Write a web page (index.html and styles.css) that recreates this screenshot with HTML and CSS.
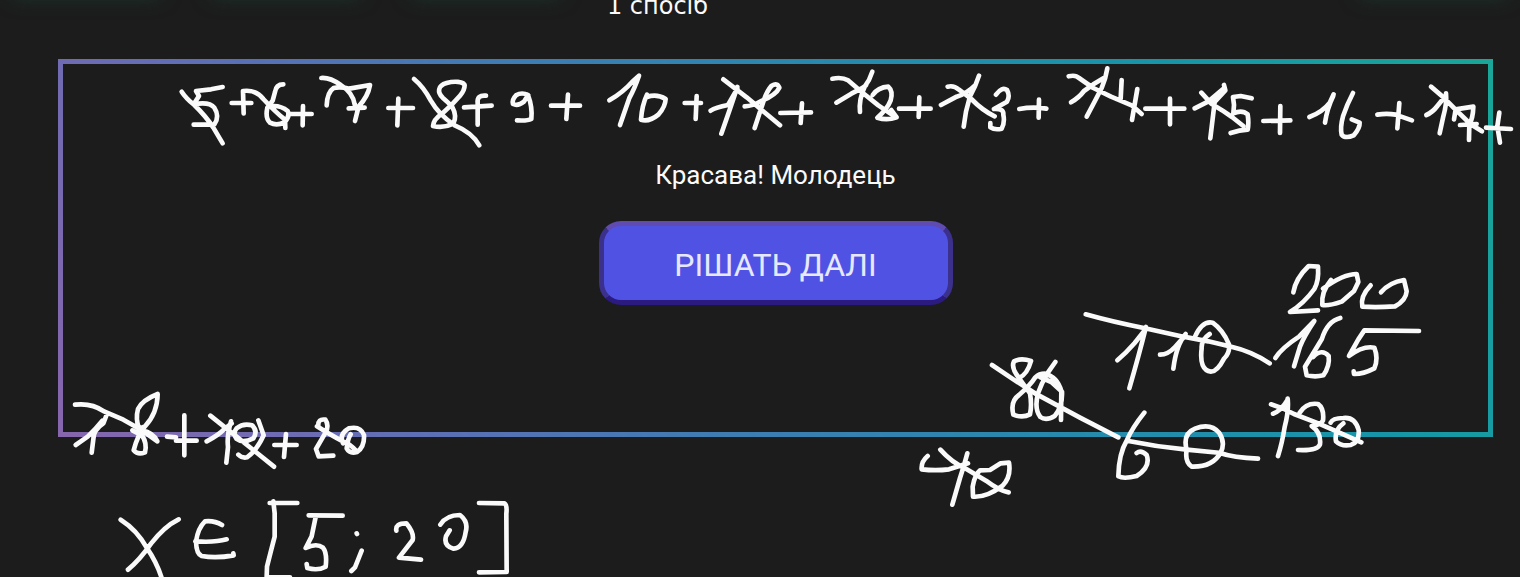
FILE: index.html
```html
<!DOCTYPE html>
<html lang="uk">
<head>
<meta charset="utf-8">
<meta name="viewport" content="width=device-width, initial-scale=1">
<title>Красава! Молодець</title>
<link rel="stylesheet" href="styles.css">
</head>
<body>
<main class="page">
  <div class="glows" aria-hidden="true">
    <span class="glow"></span><span class="glow"></span><span class="glow"></span><span class="glow glow-end"></span>
  </div>
  <p class="method">1 спосіб</p>
  <section class="frame">
    <div class="panel">
      <p class="message">Красава! Молодець</p>
      <button class="next" type="button">РІШАТЬ ДАЛІ</button>
    </div>
  </section>
  <svg class="ink" viewBox="0 0 1520 577" aria-hidden="true">
    <g transform="translate(160 55) scale(.33333)">
      <path d="M65 110 Q78 130 103 150 Q138 184 160 218 L188 265M188 96L153 103L108 108L117 123L101 148Q148 139 163 158Q180 184 163 208L101 209"/>
      <path d="M215 144L274 144M249 108L251 175M249 108Q288 103 310 132Q345 170 375 194L376 219M370 88Q348 88 345 111L338 137L322 158Q315 190 330 203Q350 214 373 202Q391 184 383 168Q360 149 329 154"/>
      <path d="M386 177L455 177M429 153L428 211M484 69Q510 67 542 90Q578 112 584 148L587 160M500 151Q502 111 521 99Q540 94 568 101L630 90Q624 125 596 154L585 198M566 160L614 158"/>
      <path d="M685 159L759 159M715 131L712 211M762 72Q790 95 812 136Q836 178 884 211Q936 232 958 271M914 92C912 78 880 78 860 84C832 92 832 112 848 128Q862 140 876 154Q892 183 880 206Q850 221 819 213Q820 194 846 176Q878 148 900 122Q914 106 914 90"/>
      <path d="M912 157L995 152M978 122Q950 119 953 145L953 209"/>
    </g>
    <g transform="translate(490 55) scale(.33333)">
      <path d="M115 121Q96 110 78 121Q65 134 69 147Q84 154 102 140L114 120Q128 157 124 192Q112 198 81 196M183 152L270 152M234 119L229 192M358 136Q400 111 427 80L447 62Q433 102 418 129L390 210M471 119Q456 150 453 194Q477 202 506 178Q526 155 527 132Q501 116 471 126"/>
      <path d="M584 144L633 144M620 123L617 192M662 167Q677 157 714 150L742 101M742 96Q721 160 694 236M700 73L770 127L870 211M764 154Q790 153 810 140Q858 120 868 98Q862 82 845 92Q830 109 820 140L794 219M871 174L963 172M936 145L932 204"/>
    </g>
    <g transform="translate(810 55) scale(.33333)">
      <path d="M67 71Q96 65 114 76L155 111L205 151L258 187M187 50Q179 76 164 95Q146 133 150 171M79 143L124 116L155 100L168 91M188 120Q204 97 235 95Q250 108 242 136Q232 162 202 188Q231 197 260 187L244 165M267 161L362 161M328 127L326 186"/>
      <path d="M413 95Q431 90 447 104L484 132Q518 167 554 184M507 62Q497 94 480 124Q466 168 461 215M393 150L440 125Q470 116 495 91M558 119Q576 94 591 105Q601 123 591 140L552 162Q582 160 580 179Q585 203 575 221Q555 226 541 217L541 204M628 162Q669 154 709 161M687 134L686 188"/>
      <path d="M776 64Q797 59 807 69L850 99L903 125L965 151L995 177M892 40Q887 72 875 99Q853 142 830 185M783 142Q807 128 822 108L850 88L885 67M935 75L932 131M982 102L966 195M1006 161L1123 161M1080 131L1080 208"/>
    </g>
    <g transform="translate(1150 50) scale(.33333)">
      <path d="M154 128L184 161Q220 182 246 201L280 228M222 105L226 121L194 156L181 265M134 175L174 155L220 116M305 145L272 138L249 141L252 165L250 190Q276 178 293 193Q297 220 293 239Q269 240 242 249M340 213L421 211M391 168L390 249"/>
      <path d="M478 201Q518 186 540 157L551 133M550 137Q531 176 525 218M609 129Q591 163 579 199Q570 232 575 254Q586 267 611 256Q630 235 629 218L605 208M682 194Q710 189 737 194L786 211M748 159L742 235M843 110Q882 141 913 175L961 222L996 244M888 130Q891 161 880 199L869 250M829 195Q848 187 862 168L887 137M912 208L917 178L970 170Q969 205 958 224L957 270M930 225L980 222M1008 233L1083 237M1048 188L1042 229L1050 278"/>
    </g>
    <g transform="translate(50 380) scale(.33333)">
      <path d="M75 74Q125 68 162 94L220 119L276 151L322 184M172 99L160 130Q129 151 130 178L125 218M77 195L113 170Q136 148 157 122M323 42Q277 60 264 87Q256 116 267 146L285 139Q322 100 323 42M285 139Q262 167 251 211Q264 226 285 217Q292 190 276 166L247 151M276 151Q310 158 322 184M351 170L378 172M378 182L440 182M403 106L403 226"/>
      <path d="M481 107L555 166L610 210L672 260M543 124Q530 168 534 201L529 248M470 184Q506 165 522 148L545 130M560 145Q579 129 606 136Q625 153 610 175Q578 191 560 177Q547 160 560 145M625 121L641 166Q620 212 591 232Q576 235 565 224M673 195L740 195M708 162L702 231M805 139Q803 115 826 119Q838 136 827 157L798 207L806 229L850 227M801 139Q843 166 873 181Q900 191 917 211M879 190Q866 163 897 145Q931 137 942 165Q944 201 921 216Q899 222 890 205Q894 174 902 163"/>
    </g>
    <g transform="translate(100 480) scale(.33333)">
      <path d="M62 119Q111 150 140 203Q170 247 184 291M236 118Q193 139 153 191Q119 240 84 269M366 135Q343 121 315 124Q294 144 288 184Q289 222 305 228Q348 236 401 226L400 220M286 184Q345 188 380 178M509 69L592 69M520 64L524 100L524 170Q511 220 501 260L500 291L570 292M626 106L728 107M647 111L635 169L617 204Q650 188 669 203Q682 219 677 260Q654 273 622 264L620 252M770 160L771 162M785 212L765 262L754 273M889 152Q885 130 919 130Q943 159 938 180L897 233L963 239M1021 134Q1038 105 1080 105Q1106 125 1097 156Q1090 204 1061 206Q1030 197 1038 169L1049 151M1137 69L1213 70Q1222 75 1219 101L1220 276L1137 277"/>
    </g>
    <g transform="translate(900 250) scale(.33333)">
      <path d="M557 193Q635 215 735 235L850 260M738 231Q717 315 688 415M652 331Q677 310 704 279L735 240M857 252Q829 284 820 356M780 314Q804 314 825 291L853 260"/>
      <path d="M276 345L340 388L405 430L540 503L655 562M393 333Q363 323 342 334Q332 353 357 384Q382 373 393 333M357 384L390 430Q396 465 390 493Q368 505 340 494Q330 454 357 435Q391 406 406 382Q417 371 435 371Q472 380 484 423L483 510M466 336L442 370Q424 401 414 430Q402 477 421 501Q438 514 464 498Q488 470 486 425L454 396L420 381"/>
      <path d="M83 618Q63 635 65 658Q107 663 147 658L204 640M121 599Q156 638 194 654L258 692Q299 723 326 727M202 610Q192 648 180 684L157 764M219 740L218 710Q224 674 240 661L270 660L302 640L327 638Q334 680 308 707Q260 743 219 740M733 488Q697 533 681 570Q656 612 655 679Q671 688 710 678Q753 650 740 615Q723 599 710 609M681 572Q770 590 860 599L964 609"/>
    </g>
    <g transform="translate(1200 250) scale(.33333)">
      <path d="M-50 260L25 274L94 290Q156 304 209 340M-15 260Q7 211 38 218Q69 240 87 283Q90 309 72 326Q52 365 33 365Q-3 361 5 295Q3 270 29 252M-40 600Q-53 551 -15 536Q32 518 58 549Q77 579 62 608Q38 652 -25 650Q-46 635 -40 600M60 609Q100 623 174 626"/>
      <path d="M280 127Q287 85 326 48L354 50Q357 93 343 117Q312 160 270 186L354 181M393 90Q363 126 367 165Q384 169 425 155L462 123L475 96L470 72Q430 72 369 116M512 106Q480 139 487 170Q530 173 585 169Q618 151 620 124L612 90Q568 97 543 127M226 324Q245 294 297 260L343 213Q312 259 300 290L282 349M421 204Q382 214 366 266L315 350L320 376Q346 382 370 376Q390 348 386 318Q366 294 339 321M657 243L493 241L475 268L447 318Q490 286 523 293Q536 326 523 355Q488 373 462 372L461 364"/>
      <path d="M213 463Q250 474 282 492L355 520L425 551L484 577M263 446Q267 481 254 531Q246 581 234 618M219 491Q243 483 263 449M299 488Q319 457 354 462Q373 476 369 511Q364 524 335 528Q364 548 360 583Q352 603 294 600M392 518Q398 504 430 504Q465 500 476 540Q479 578 452 585Q424 590 408 574Q402 540 430 520"/>
    </g>
  </svg>
</main>
</body>
</html>
```
FILE: styles.css
```css
* {
  box-sizing: border-box;
}

body {
  margin: 0;
  background: #1c1c1c;
  color: #fafafa;
  font-family: Roboto, sans-serif;
}

.page {
  position: relative;
  min-height: 100vh;
  padding: 0 27px 0 58px;
  overflow: hidden;
}

.glows {
  position: absolute;
  top: -20px;
  left: 16px;
  right: 16px;
  display: flex;
  gap: 60px;
}

.glow {
  width: 140px;
  height: 12px;
  box-shadow: 0 0 20px 4px #1c3a30;
}

.glow-end {
  margin-left: auto;
}

.method {
  margin: 0;
  padding-right: 236px;
  height: 59px;
  line-height: 12px;
  text-align: center;
  font-family: "DejaVu Sans", sans-serif;
  font-size: 24px;
}

.frame {
  padding: 5px;
  background: linear-gradient(60deg, #8766ac 0%, #706bb2 13%, #5a70b6 24%, #3f7cb2 40%, #2a88ae 58%, #1795a8 80%, #1aa698 100%);
}

.panel {
  display: flex;
  flex-direction: column;
  align-items: center;
  gap: 30px;
  min-height: 368px;
  padding-top: 95px;
  background: #1c1c1c;
}

.message {
  margin: 0;
  font-size: 26px;
  line-height: 32px;
}

.next {
  width: 354px;
  height: 84px;
  padding: 4px 0 0;
  border: 5px solid;
  border-color: #604bb0 #3b308c #2b1b80 #3b308c;
  border-radius: 22px;
  background: #5052e4;
  color: #e6e8ff;
  font-family: Roboto, sans-serif;
  font-size: 32px;
  font-weight: 400;
}

.ink {
  position: absolute;
  top: 0;
  left: 0;
  width: 100%;
  pointer-events: none;
  fill: none;
  stroke: #fafafa;
  stroke-width: 14px;
  stroke-linecap: round;
  stroke-linejoin: round;
}
```
